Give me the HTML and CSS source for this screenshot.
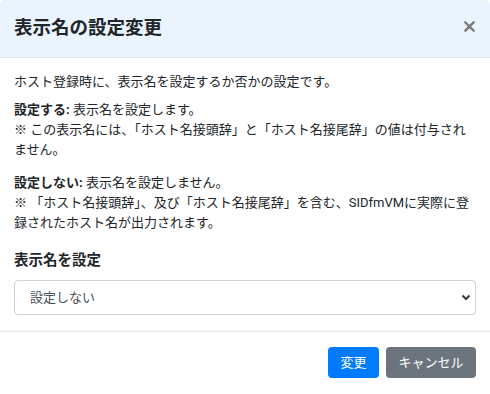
FILE: index.html
```html
<!DOCTYPE html>
<html lang="ja">
<head>
<meta charset="utf-8">
<link rel="stylesheet" href="styles.css">
</head>
<body>
<div class="modal">
  <div class="modal-header">
    <h5 class="modal-title">表示名の設定変更</h5>
    <button class="close" type="button" aria-label="Close">
      <svg width="11" height="11" viewBox="0 0 11 11"><path d="M1.5 1.5 L9.5 9.5 M9.5 1.5 L1.5 9.5" stroke="#7a7a7a" stroke-width="2.4" stroke-linecap="square"/></svg>
    </button>
  </div>
  <div class="modal-body">
    <p class="p1">ホスト登録時に、表示名を設定するか否かの設定です。</p>
    <p class="p2"><b>設定する:</b> 表示名を設定します。<br>※ この表示名には、「ホスト名接頭辞」と「ホスト名接尾辞」の値は付与されません。</p>
    <p class="p3"><b>設定しない:</b> 表示名を設定しません。<br>※ 「ホスト名接頭辞」、及び「ホスト名接尾辞」を含む、SIDfmVMに実際に登録されたホスト名が出力されます。</p>
    <label class="label">表示名を設定</label>
    <div class="select-wrap">
      <select class="select">
        <option>設定しない</option>
        <option>設定する</option>
      </select>
      <svg class="chev" width="10" height="7" viewBox="0 0 10 7"><path d="M1.5 1.5 L5 5 L8.5 1.5" fill="none" stroke="#343a40" stroke-width="2"/></svg>
    </div>
  </div>
  <div class="modal-footer">
    <button class="btn btn-primary" type="button">変更</button>
    <button class="btn btn-secondary" type="button">キャンセル</button>
  </div>
</div>
</body>
</html>
```

FILE: styles.css
```css
* { box-sizing: border-box; }
html, body { margin: 0; padding: 0; background: #fff; }
body {
  font-family: Roboto, "Noto Sans CJK JP", "Noto Sans", sans-serif;
  color: #212529;
  font-size: 13px;
  line-height: 20px;
}
.modal {
  width: 490px;
  height: 394px;
  background: #fff;
  border-radius: 5px 5px 0 0;
  overflow: hidden;
}
.modal-header {
  height: 58px;
  background: #e9f4ff;
  border-bottom: 1px solid #e3e6ea;
  display: flex;
  align-items: center;
  justify-content: space-between;
  padding: 0 14px 0 14px;
}
.modal-title {
  margin: 0;
  font-size: 18.5px;
  font-weight: 700;
  line-height: 24px;
  color: #212529;
  padding-bottom: 1px;
}
.close {
  background: none;
  border: 0;
  padding: 0;
  width: 11px;
  height: 11px;
  margin-right: 1px;
  margin-bottom: 5px;
  display: flex;
}
.modal-body {
  padding: 14px 14px 16px 14px;
}
.modal-body p { margin: 0; }
.p1 { margin-bottom: 8px !important; }
.p2 { margin-bottom: 13px !important; }
.p3 { margin-bottom: 18px !important; }
.modal-body b { font-weight: 700; }
.label {
  display: block;
  font-size: 14.5px;
  font-weight: 700;
  line-height: 20px;
  margin-bottom: 9px;
}
.select-wrap {
  position: relative;
}
.select {
  display: block;
  width: 100%;
  height: 35px;
  appearance: none;
  -webkit-appearance: none;
  border: 1px solid #ced4da;
  border-radius: 4px;
  background: #fff;
  color: #495057;
  font-family: inherit;
  font-size: 13px;
  padding: 0 15px;
}
.chev {
  position: absolute;
  right: 5px;
  top: 14px;
}
.modal-footer {
  border-top: 1px solid #e3e6ea;
  padding: 15px 14px 15px 14px;
  display: flex;
  justify-content: flex-end;
  gap: 7px;
}
.btn {
  height: 31px;
  border: 0;
  border-radius: 4px;
  color: #fff;
  font-family: inherit;
  font-size: 13px;
  line-height: 31px;
  padding: 0 12.5px;
}
.btn-primary { background: #007bff; }
.btn-secondary { background: #6c757d; }
```
